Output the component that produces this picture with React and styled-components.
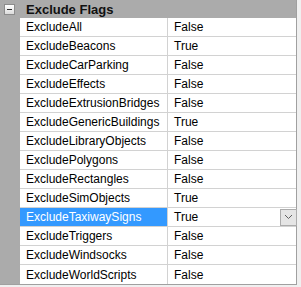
import React from 'react';
import styled, { createGlobalStyle } from 'styled-components';

const GlobalStyle = createGlobalStyle`
  html, body {
    margin: 0;
    padding: 0;
    background: #f0f0f0;
  }
  body {
    font-family: "Liberation Sans", Arial, sans-serif;
    font-size: 12px;
    color: #000;
  }
`;

const Grid = styled.div`
  width: 296px;
  background: #ababab;
  border-right: 1px solid #a0a0a0;
  border-bottom: 1px solid #a0a0a0;
`;

const CategoryRow = styled.div`
  display: flex;
  align-items: center;
  height: 18px;
  background: #ababab;
`;

const Toggle = styled.div`
  width: 20px;
  display: flex;
  justify-content: center;
  align-items: center;
`;

const ToggleBox = styled.div`
  width: 9px;
  height: 9px;
  margin-left: -2px;
  border: 1px solid #8c8c8c;
  background: linear-gradient(#ffffff, #dcdcdc);
  display: flex;
  align-items: center;
  justify-content: center;

  &::before {
    content: '';
    width: 5px;
    height: 1px;
    background: #333;
  }
`;

const CategoryTitle = styled.span`
  font-weight: bold;
  font-size: 13px;
  padding-left: 6px;
  color: #111;
`;

const Row = styled.div`
  display: flex;
  height: 18px;
  border-bottom: 1px solid #d2d2d2;
  margin-left: 20px;
  background: #fff;
  &:last-child {
    border-bottom: none;
    height: 19px;
  }
`;

const Label = styled.div`
  width: 148px;
  flex-shrink: 0;
  display: flex;
  align-items: center;
  padding-left: 6px;
  box-sizing: border-box;
  white-space: nowrap;
  overflow: hidden;
  background: ${p => (p.$selected ? '#3399ff' : '#fff')};
  color: ${p => (p.$selected ? '#fff' : '#000')};
  border-right: 1px solid #d2d2d2;
`;

const Value = styled.div`
  flex: 1;
  display: flex;
  align-items: center;
  justify-content: space-between;
  padding-left: 6px;
`;

const DropButton = styled.div`
  width: 17px;
  height: 17px;
  margin-right: -1px;
  box-sizing: border-box;
  border: 1px solid #acacac;
  background: #e5e5e5;
  display: flex;
  align-items: center;
  justify-content: center;
`;

const rows = [
  ['ExcludeAll', 'False'],
  ['ExcludeBeacons', 'True'],
  ['ExcludeCarParking', 'False'],
  ['ExcludeEffects', 'False'],
  ['ExcludeExtrusionBridges', 'False'],
  ['ExcludeGenericBuildings', 'True'],
  ['ExcludeLibraryObjects', 'False'],
  ['ExcludePolygons', 'False'],
  ['ExcludeRectangles', 'False'],
  ['ExcludeSimObjects', 'True'],
  ['ExcludeTaxiwaySigns', 'True'],
  ['ExcludeTriggers', 'False'],
  ['ExcludeWindsocks', 'False'],
  ['ExcludeWorldScripts', 'False'],
];

const App = () => {
  return (
    <>
      <GlobalStyle />
      <Grid>
        <CategoryRow>
          <Toggle>
            <ToggleBox />
          </Toggle>
          <CategoryTitle>Exclude Flags</CategoryTitle>
        </CategoryRow>
        {rows.map(([name, value]) => {
          const selected = name === 'ExcludeTaxiwaySigns';
          return (
            <Row key={name}>
              <Label $selected={selected}>{name}</Label>
              <Value>
                {value}
                {selected && (
                  <DropButton>
                    <svg width="9" height="6" viewBox="0 0 9 6">
                      <path d="M1 1 L4.5 4.5 L8 1" fill="none" stroke="#606060" strokeWidth="1" />
                    </svg>
                  </DropButton>
                )}
              </Value>
            </Row>
          );
        })}
      </Grid>
    </>
  );
};

export default App;
